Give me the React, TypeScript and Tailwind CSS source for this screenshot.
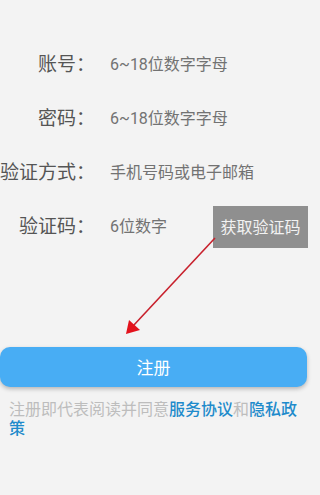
export default function App() {
  const rows = [
    { label: "账号：", hint: "6~18位数字字母" },
    { label: "密码：", hint: "6~18位数字字母" },
    { label: "验证方式：", hint: "手机号码或电子邮箱" },
  ];

  return (
    <div
      className="relative w-[320px] h-[495px] overflow-hidden bg-[#f3f3f3]"
      style={{ fontFamily: 'Roboto, "Noto Sans CJK SC", sans-serif' }}
    >
      <div className="flex flex-col pt-[38px]">
        {rows.map((r) => (
          <div key={r.label} className="flex items-center h-[54px]">
            <div className="w-[95px] shrink-0 flex justify-end">
              <span className="shrink-0 whitespace-nowrap text-[19px] text-[#555]">{r.label}</span>
            </div>
            <span className="ml-[15px] text-[16px] text-[#727272] whitespace-nowrap">{r.hint}</span>
          </div>
        ))}
        <div className="flex items-center h-[54px]">
          <div className="w-[95px] shrink-0 flex justify-end">
            <span className="shrink-0 whitespace-nowrap text-[19px] text-[#555]">验证码：</span>
          </div>
          <span className="ml-[15px] text-[16px] text-[#727272] whitespace-nowrap">6位数字</span>
          <button className="ml-auto mr-[12px] w-[95px] h-[42px] pt-[2px] bg-[#8f8f8f] text-[16px] text-[#f2f2f2] flex items-center justify-center">
            获取验证码
          </button>
        </div>
      </div>

      <button className="mt-[93px] w-[307px] h-[40px] pt-[4px] rounded-[10px] bg-[#48adf4] text-white text-[17px] flex items-center justify-center shadow-[0_2px_4px_rgba(0,0,0,0.25)]">
        注册
      </button>

      <p className="mt-[13px] pl-[9px] w-[308px] text-[16px] leading-[19px] text-[#bdbdbd]">
        注册即代表阅读并同意<span className="text-[#1f8bcb] font-medium">服务协议</span>和
        <span className="text-[#1f8bcb] font-medium">隐私政策</span>
      </p>

      {/* red arrow overlay */}
      <svg className="absolute left-0 top-0 pointer-events-none" width="320" height="495" viewBox="0 0 320 495">
        <line x1="215" y1="238" x2="133" y2="326" stroke="#c8202c" strokeWidth="1.6" />
        <polygon points="126,334 129,320 140,330" fill="#e3121c" />
      </svg>
    </div>
  );
}
